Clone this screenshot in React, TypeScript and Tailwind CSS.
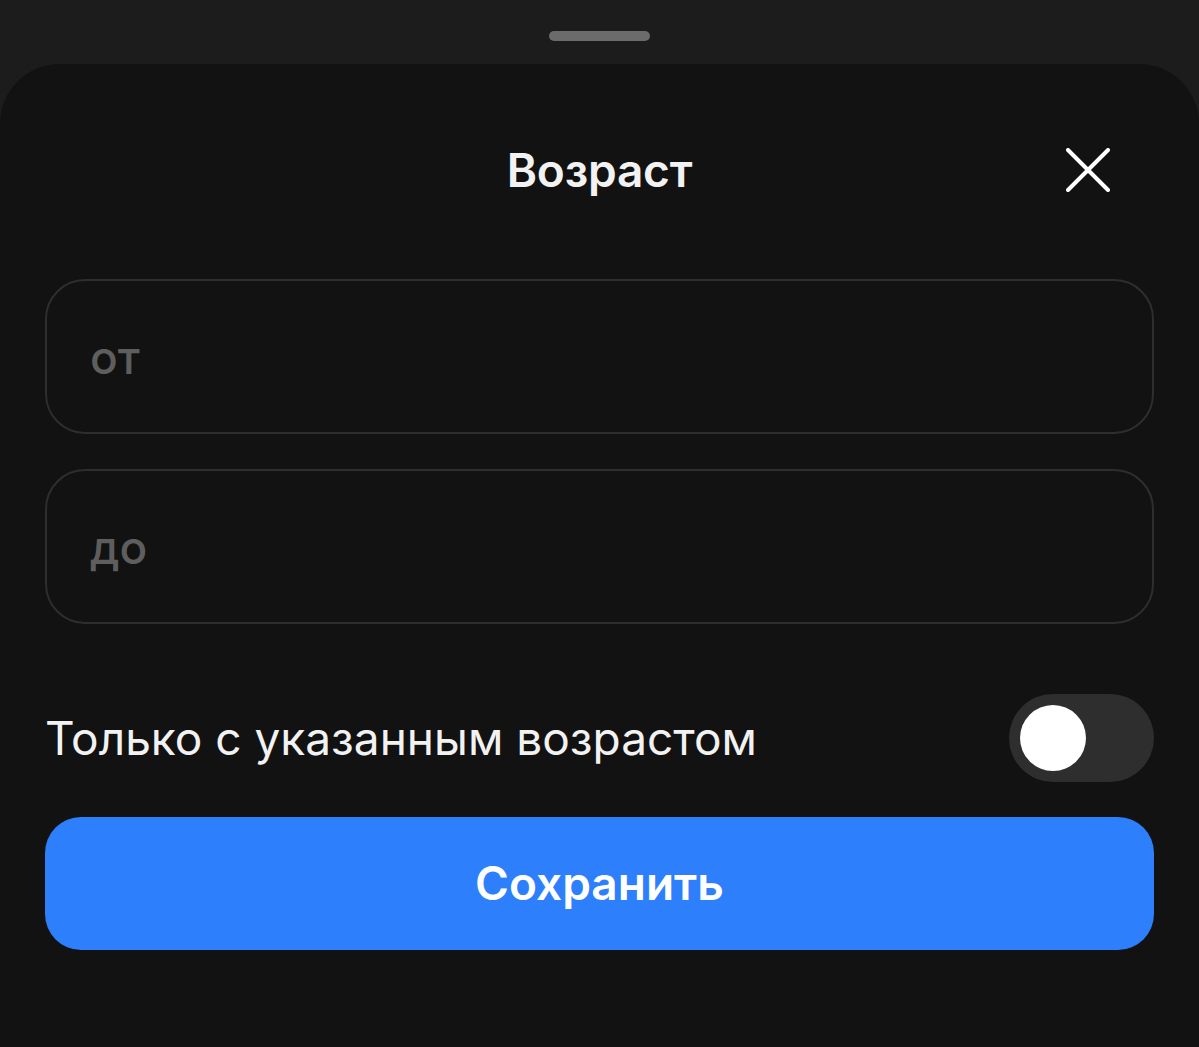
import React, { useState } from 'react';

export default function App() {
  const [onlyWithAge, setOnlyWithAge] = useState(false);

  return (
    <div
      className="w-[1199px] h-[1047px] bg-[#1c1c1c] flex flex-col overflow-hidden"
      style={{ fontFamily: 'Inter, "Noto Sans", sans-serif' }}
    >
      {/* Grabber */}
      <div className="h-[64px] flex justify-center pt-[31px] shrink-0">
        <div className="w-[101px] h-[10px] rounded-full bg-[#6b6b6b]" />
      </div>

      {/* Sheet */}
      <div className="flex-1 bg-[#121212] rounded-t-[60px] px-[45px] flex flex-col">
        <div className="relative h-[212px] flex items-center justify-center shrink-0">
          <h2 className="text-[46px] font-semibold text-[#f2f2f2] tracking-[-0.2px]">Возраст</h2>
          <button className="absolute right-[44px] top-[84px] w-[44px] h-[44px] flex items-center justify-center text-white">
            <svg width="44" height="44" viewBox="0 0 44 44" fill="none">
              <path d="M2 2 L42 42 M42 2 L2 42" stroke="currentColor" strokeWidth="4" strokeLinecap="round" />
            </svg>
          </button>
        </div>

        <div className="flex flex-col gap-[35px] mt-[3px]">
          <input
            placeholder="от"
            className="h-[155px] w-full rounded-[40px] border-2 border-[#2e2e2e] bg-transparent px-[43px] text-[46px] font-medium text-white placeholder-[#5e5e5e] outline-none"
          />
          <input
            placeholder="до"
            className="h-[155px] w-full rounded-[40px] border-2 border-[#2e2e2e] bg-transparent px-[43px] text-[46px] font-medium text-white placeholder-[#5e5e5e] outline-none"
          />
        </div>

        <div className="flex items-center justify-between mt-[70px]">
          <span className="text-[46px] text-[#f2f2f2] leading-none">Только с указанным возрастом</span>
          <button
            onClick={() => setOnlyWithAge(!onlyWithAge)}
            className={`w-[145px] h-[88px] rounded-full p-[11px] flex ${onlyWithAge ? 'bg-[#2d7ffb] justify-end' : 'bg-[#2e2e2e] justify-start'}`}
          >
            <div className="w-[66px] h-[66px] rounded-full bg-white" />
          </button>
        </div>

        <button className="mt-[35px] h-[133px] w-full rounded-[36px] bg-[#2d7ffb] text-[46px] font-semibold text-white">
          Сохранить
        </button>
      </div>
    </div>
  );
}
